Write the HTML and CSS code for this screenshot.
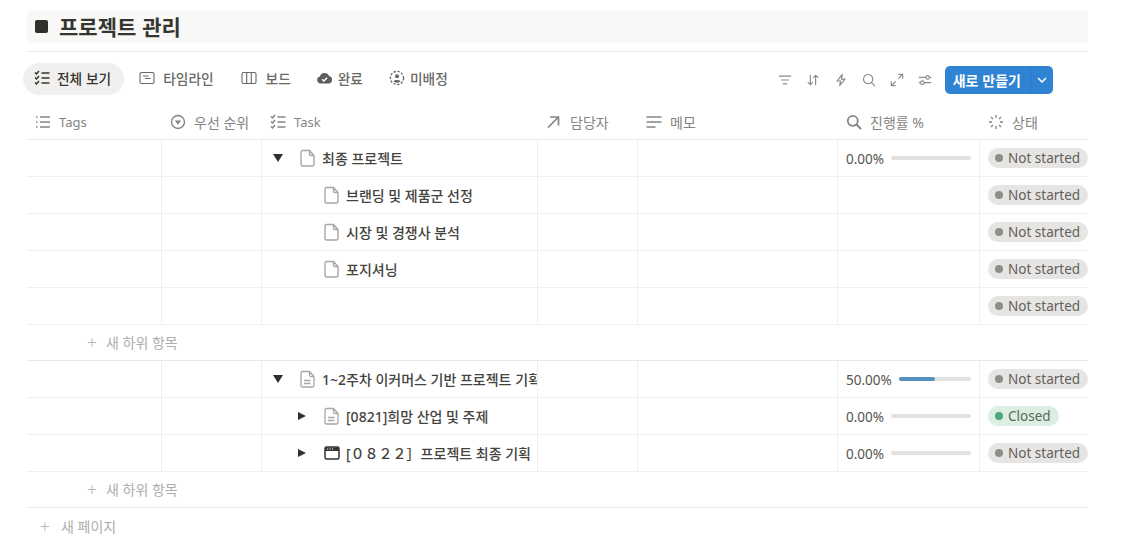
FILE: index.html
```html
<!DOCTYPE html>
<html lang="ko">
<head>
<meta charset="utf-8">
<title>프로젝트 관리</title>
<link rel="stylesheet" href="styles.css">
</head>
<body>
<svg class="defs" width="0" height="0" aria-hidden="true">
  <defs>
    <symbol id="page" viewBox="0 0 16 18"><path d="M2.500 1.500h7L14 6.500v9a1.500 1.500 0 0 1-1.500 1.500h-10A1.500 1.500 0 0 1 1 15.500V3a1.500 1.500 0 0 1 1.500-1.500z M9.500 1.500v3.500a1.500 1.500 0 0 0 1.500 1.500h3" fill="none" stroke="#a8a7a4" stroke-width="1.400"/></symbol>
    <symbol id="pagetext" viewBox="0 0 16 18"><path d="M2.500 1.500h7L14 6.500v9a1.500 1.500 0 0 1-1.500 1.500h-10A1.500 1.500 0 0 1 1 15.500V3a1.500 1.500 0 0 1 1.500-1.500z M9.500 1.500v3.500a1.500 1.500 0 0 0 1.500 1.500h3 M4 10.500h6.500 M4 13.500h6.500" fill="none" stroke="#a8a7a4" stroke-width="1.300"/></symbol>
    <symbol id="checks" viewBox="0 0 16 16"><path d="M1 2.500l1.500 1.500L5 1 M1 7.500L2.500 9 5 6 M1 12.500L2.500 14 5 11 M7.500 3h8 M7.500 8h8 M7.500 13h8" fill="none" stroke="currentColor" stroke-width="1.500"/></symbol>
  </defs>
</svg>
<main class="page">
  <h1 class="title"><span class="title-square"></span><span>프로젝트 관리</span></h1>
  <div class="toolbar">
    <nav class="tabs">
      <a class="tab tab-active"><svg class="ico" viewBox="0 0 16 16"><use href="#checks"/></svg>전체 보기</a>
      <a class="tab"><svg class="ico" viewBox="0 0 16 16"><path d="M2.500 2.500h11a1.500 1.500 0 0 1 1.500 1.500v8a1.500 1.500 0 0 1-1.500 1.500h-11A1.500 1.500 0 0 1 1 12V4a1.500 1.500 0 0 1 1.500-1.500z M4 6h5.500 M6 8.500h5.500" fill="none" stroke="currentColor" stroke-width="1.100"/></svg>타임라인</a>
      <a class="tab tab-board"><svg class="ico" viewBox="0 0 16 16"><path d="M2.500 2.500h11a1.500 1.500 0 0 1 1.500 1.500v8a1.500 1.500 0 0 1-1.500 1.500h-11A1.500 1.500 0 0 1 1 12V4a1.500 1.500 0 0 1 1.500-1.500z M5.700 2.500v11 M10.300 2.500v11" fill="none" stroke="currentColor" stroke-width="1.100"/></svg>보드</a>
      <a class="tab tab-tight"><svg class="ico ico-cloud" viewBox="0 0 16 16"><path d="M4 13.500a3.500 3.500 0 0 1-.6-6.900A4.800 4.800 0 0 1 12.500 6a3.800 3.800 0 0 1-.3 7.500z" fill="#5f5e5b"/><path d="M5.600 9.200l1.800 1.800 3.200-3.300" fill="none" stroke="#fff" stroke-width="1.500"/></svg>완료</a>
      <a class="tab tab-tight"><svg class="ico" viewBox="0 0 16 16"><circle cx="8" cy="8" r="6.600" fill="none" stroke="currentColor" stroke-width="1.300" stroke-dasharray="2.400 1.500"/><circle cx="8" cy="6.300" r="2" fill="currentColor"/><path d="M4.500 11.200c1-1.700 6-1.700 7 0a4.800 4.800 0 0 1-7 0z" fill="currentColor"/></svg>미배정</a>
    </nav>
    <div class="actions">
      <svg class="tool" viewBox="0 0 16 16"><path d="M1 3.500h14 M3.500 8h9 M5.500 12.500h5" fill="none" stroke="currentColor" stroke-width="1.300"/></svg>
      <svg class="tool" viewBox="0 0 16 16"><path d="M5 2v11.500 M2 10.500l3 3 3-3 M11 14V2.500 M8 5.500l3-3 3 3" fill="none" stroke="currentColor" stroke-width="1.300"/></svg>
      <svg class="tool" viewBox="0 0 16 16"><path d="M9.500 1.500L3.500 9.200h4l-1 5.300L12.500 7h-4z" fill="none" stroke="currentColor" stroke-width="1.300" stroke-linejoin="round"/></svg>
      <svg class="tool" viewBox="0 0 16 16"><circle cx="7" cy="7" r="5.300" fill="none" stroke="currentColor" stroke-width="1.300"/><path d="M10.900 10.900L15 15" stroke="currentColor" stroke-width="1.300"/></svg>
      <svg class="tool" viewBox="0 0 16 16"><path d="M9.500 1.500h5v5 M14.500 1.500L9.500 6.500 M6.500 14.500h-5v-5 M1.500 14.500l5-5" fill="none" stroke="currentColor" stroke-width="1.300"/></svg>
      <svg class="tool" viewBox="0 0 16 16"><path d="M1 5h8 M13 5h2 M1 11h2 M7 11h8" fill="none" stroke="currentColor" stroke-width="1.300"/><circle cx="11" cy="5" r="2" fill="none" stroke="currentColor" stroke-width="1.300"/><circle cx="5" cy="11" r="2" fill="none" stroke="currentColor" stroke-width="1.300"/></svg>
      <div class="new-btn"><span class="new-label">새로 만들기</span><span class="new-caret"><svg viewBox="0 0 12 12" width="12" height="12"><path d="M2 4l4 4 4-4" fill="none" stroke="#fff" stroke-width="1.500"/></svg></span></div>
    </div>
  </div>

  <div class="grid head">
    <div class="hcell hcell-latin"><svg class="ico" viewBox="0 0 16 16"><path d="M1 3h1.500 M1 8h1.500 M1 13h1.500 M5 3h10 M5 8h10 M5 13h10" fill="none" stroke="currentColor" stroke-width="1.300"/></svg>Tags</div>
    <div class="hcell"><svg class="ico" viewBox="0 0 16 16"><circle cx="8" cy="8" r="6.500" fill="none" stroke="currentColor" stroke-width="1.400"/><path d="M4.800 6.500h6.400L8 10.800z" fill="currentColor"/></svg>우선 순위</div>
    <div class="hcell hcell-latin"><svg class="ico" viewBox="0 0 16 16"><use href="#checks"/></svg>Task</div>
    <div class="hcell hcell-big"><svg class="ico" viewBox="0 0 16 16"><path d="M2 13.500L12 3.500 M4 3h8.500v8.500" fill="none" stroke="currentColor" stroke-width="1.700"/></svg>담당자</div>
    <div class="hcell hcell-big"><svg class="ico" viewBox="0 0 16 16"><path d="M.5 3h15 M.5 8h15 M.5 13h9" fill="none" stroke="currentColor" stroke-width="1.700"/></svg>메모</div>
    <div class="hcell hcell-big"><svg class="ico" viewBox="0 0 16 16"><circle cx="6.800" cy="6.800" r="5" fill="none" stroke="currentColor" stroke-width="1.800"/><path d="M10.500 10.500L15 15" stroke="currentColor" stroke-width="1.800"/></svg>진행률 %</div>
    <div class="hcell hcell-big"><svg class="ico" viewBox="0 0 16 16"><path d="M8 1v3 M8 12v3 M1 8h3 M12 8h3 M3 3l2 2 M11 11l2 2 M13 3l-2 2 M5 11l-2 2" fill="none" stroke="currentColor" stroke-width="1.300"/></svg>상태</div>
  </div>

  <div class="grid row">
    <div class="cell"></div><div class="cell"></div>
    <div class="cell task"><span class="caret caret-down"></span><svg class="doc"><use href="#page"/></svg><span class="name">최종 프로젝트</span></div>
    <div class="cell"></div><div class="cell"></div>
    <div class="cell prog"><span class="pct">0.00%</span><span class="bar"></span></div>
    <div class="cell st"><span class="pill"><i class="dot"></i>Not started</span></div>
  </div>
  <div class="grid row">
    <div class="cell"></div><div class="cell"></div>
    <div class="cell task child"><svg class="doc"><use href="#page"/></svg><span class="name">브랜딩 및 제품군 선정</span></div>
    <div class="cell"></div><div class="cell"></div><div class="cell"></div>
    <div class="cell st"><span class="pill"><i class="dot"></i>Not started</span></div>
  </div>
  <div class="grid row">
    <div class="cell"></div><div class="cell"></div>
    <div class="cell task child"><svg class="doc"><use href="#page"/></svg><span class="name">시장 및 경쟁사 분석</span></div>
    <div class="cell"></div><div class="cell"></div><div class="cell"></div>
    <div class="cell st"><span class="pill"><i class="dot"></i>Not started</span></div>
  </div>
  <div class="grid row">
    <div class="cell"></div><div class="cell"></div>
    <div class="cell task child"><svg class="doc"><use href="#page"/></svg><span class="name">포지셔닝</span></div>
    <div class="cell"></div><div class="cell"></div><div class="cell"></div>
    <div class="cell st"><span class="pill"><i class="dot"></i>Not started</span></div>
  </div>
  <div class="grid row">
    <div class="cell"></div><div class="cell"></div><div class="cell"></div>
    <div class="cell"></div><div class="cell"></div><div class="cell"></div>
    <div class="cell st"><span class="pill"><i class="dot"></i>Not started</span></div>
  </div>
  <div class="add-sub"><span class="plus">+</span>새 하위 항목</div>

  <div class="grid row">
    <div class="cell"></div><div class="cell"></div>
    <div class="cell task"><span class="caret caret-down"></span><svg class="doc"><use href="#pagetext"/></svg><span class="name">1~2주차 이커머스 기반 프로젝트 기획</span></div>
    <div class="cell"></div><div class="cell"></div>
    <div class="cell prog"><span class="pct">50.00%</span><span class="bar"><span class="bar-fill"></span></span></div>
    <div class="cell st"><span class="pill"><i class="dot"></i>Not started</span></div>
  </div>
  <div class="grid row">
    <div class="cell"></div><div class="cell"></div>
    <div class="cell task sub"><span class="caret caret-right"></span><svg class="doc"><use href="#pagetext"/></svg><span class="name">[0821]희망 산업 및 주제</span></div>
    <div class="cell"></div><div class="cell"></div>
    <div class="cell prog"><span class="pct">0.00%</span><span class="bar"></span></div>
    <div class="cell st"><span class="pill pill-green"><i class="dot dot-green"></i>Closed</span></div>
  </div>
  <div class="grid row">
    <div class="cell"></div><div class="cell"></div>
    <div class="cell task sub"><span class="caret caret-right"></span><svg class="doc doc-win" viewBox="0 0 16 14"><path d="M2.500 1h11A1.500 1.500 0 0 1 15 2.500v9a1.500 1.500 0 0 1-1.500 1.500h-11A1.500 1.500 0 0 1 1 11.500v-9A1.500 1.500 0 0 1 2.500 1z" fill="none" stroke="#37352f" stroke-width="1.500"/><path d="M1 1.500h14v3.500H1z" fill="#37352f"/><path d="M3 3h1.200 M5.500 3h1.200 M8 3h1.200" stroke="#fff" stroke-width="1"/></svg><span class="name">[０８２２］프로젝트 최종 기획</span></div>
    <div class="cell"></div><div class="cell"></div>
    <div class="cell prog"><span class="pct">0.00%</span><span class="bar"></span></div>
    <div class="cell st"><span class="pill"><i class="dot"></i>Not started</span></div>
  </div>
  <div class="add-sub"><span class="plus">+</span>새 하위 항목</div>
  <div class="add-page"><span class="plus">+</span>새 페이지</div>
</main>
</body>
</html>
```
FILE: styles.css
```css
* { box-sizing: border-box; }
html, body { margin: 0; height: 540px; overflow: hidden; background: #fff; }
body {
  font-family: "Noto Sans", "Noto Sans CJK KR", sans-serif;
  color: #37352f;
  font-size: 14px;
}
.defs { position: absolute; }
.page { width: 1061px; margin-left: 27px; padding-top: 10px; }

.title {
  margin: 0;
  height: 33px;
  display: flex;
  align-items: center;
  gap: 11px;
  padding-left: 8px;
  background: #f8f8f7;
  border-radius: 4px;
  font: 700 21px/33px "Noto Sans CJK KR", sans-serif;
  color: #37352f;
}
.title-square { width: 13px; height: 13px; border-radius: 2px; background: #32302c; }

.toolbar {
  margin-top: 8px;
  border-top: 1px solid #e6e6e4;
  padding-top: 11px;
  height: 54px;
  display: flex;
  justify-content: space-between;
}
.tabs { display: flex; margin-left: -4px; gap: 3px; height: 32px; }
.tab {
  display: flex;
  align-items: center;
  gap: 8px;
  padding: 0 12px 2px;
  border-radius: 16px;
  color: #6a6966;
  font: 500 13.700px "Noto Sans CJK KR", sans-serif;
}
.tab-active { background: #f1f0ef; color: #37352f; gap: 7px; padding: 0 13px 2px 11px; }
.tab-board { padding-right: 10px; gap: 9px; }
.tab-tight { gap: 5px; padding-right: 11px; }
.ico { width: 16px; height: 16px; flex: none; }
.ico-cloud { width: 17px; }

.actions { display: flex; align-items: center; height: 32px; padding-top: 1px; margin-right: 35px; gap: 14px; color: #8b8a87; }
.tool { width: 14px; height: 14px; flex: none; }
.new-btn {
  margin-left: -1px;
  display: flex;
  height: 28px;
  background: #2f83d2;
  border-radius: 5px;
  color: #fff;
  font: 700 14px/28px "Noto Sans CJK KR", sans-serif;
}
.new-label { padding: 0 9px 0 8px; }
.new-caret { width: 23px; display: flex; align-items: center; justify-content: center; border-left: 1px solid #2b77c1; }

.grid { display: grid; grid-template-columns: 135px 100px 276px 100px 200px 142px 108px; }
.head { height: 35px; border-bottom: 1px solid #e9e9e7; color: #85847f; }
.hcell { display: flex; align-items: center; gap: 8px; padding-left: 8px; font: 400 14px "Noto Sans", "Noto Sans CJK KR", sans-serif; }
.hcell-latin { font-size: 13px; }

.row { height: 37px; border-bottom: 1px solid #efefed; }
.cell { border-right: 1px solid #efefed; display: flex; align-items: center; min-width: 0; }
.cell:last-child { border-right: 0; }
.task { overflow: hidden; padding-left: 11px; white-space: nowrap; }
.task.child { padding-left: 62px; }
.task.sub { padding-left: 36px; }
.caret { width: 0; height: 0; flex: none; }
.caret-down { border-left: 5px solid transparent; border-right: 5px solid transparent; border-top: 8px solid #32302c; margin-right: 17px; }
.caret-right { border-top: 4.500px solid transparent; border-bottom: 4.500px solid transparent; border-left: 8px solid #32302c; margin-right: 18px; }
.doc { width: 16px; height: 18px; flex: none; margin-right: 6px; }
.doc-win { height: 14px; }
.name { font: 500 14px "Noto Sans", "Noto Sans CJK KR", sans-serif; color: #45433e; }

.prog { padding: 0 8px; gap: 7px; }
.pct { font-size: 13.500px; color: #55534e; padding-top: 1px; }
.bar { flex: 1; height: 4px; border-radius: 2px; background: #e3e2e0; }
.bar-fill { display: block; width: 50%; height: 100%; border-radius: 2px; background: #5291bd; }

.st { padding-left: 8px; }
.pill {
  display: inline-flex;
  align-items: center;
  gap: 5px;
  height: 20px;
  padding: 0 8px 0 7px;
  border-radius: 10px;
  background: #e6e5e3;
  color: #625f5a;
  font-size: 13.500px;
  white-space: nowrap;
}
.dot { width: 8px; height: 8px; border-radius: 50%; background: #8f8d89; }
.pill-green { background: #dbeee1; color: #4d6d5a; }
.dot-green { background: #4aa77b; }

.add-sub {
  height: 36px;
  border-bottom: 1px solid #e9e9e7;
  display: flex;
  align-items: center;
  padding: 0 0 2px 59px;
  color: #aeadaa;
  font-size: 14px;
}
.plus { width: 12px; margin-right: 8px; font-size: 18px; line-height: 1; color: #b8b7b4; font-weight: 300; text-align: center; }
.add-page {
  height: 37px;
  display: flex;
  align-items: center;
  gap: 2px;
  padding: 0 0 2px 12px;
  color: #aeadaa;
  font-size: 14px;
}
```
